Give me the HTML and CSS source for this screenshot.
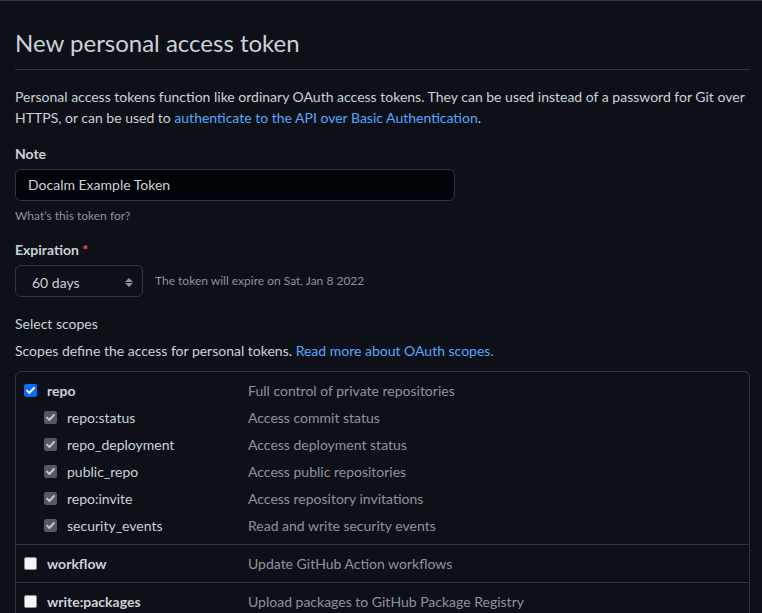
FILE: index.html
```html
<!DOCTYPE html>
<html>
<head>
<meta charset="utf-8">
<link rel="stylesheet" href="styles.css">
</head>
<body>
<div class="page">
  <div class="subhead"><h2 class="subhead-heading">New personal access token</h2></div>
  <p class="intro">Personal access tokens function like ordinary OAuth access tokens. They can be used instead of a password for Git over HTTPS, or can be used to <a href="#">authenticate to the API over Basic Authentication</a>.</p>

  <div class="form-group">
    <label class="label">Note</label>
    <div class="input">Docalm Example Token</div>
    <p class="note">What’s this token for?</p>
  </div>

  <div class="form-group form-group-exp">
    <label class="label">Expiration <span class="req">*</span></label>
    <div class="exp-row">
      <div class="select"><span>60 days</span>
        <svg class="arrows" width="8" height="9" viewBox="0 0 8 9"><path d="M4 0 L8 4 H0 Z M0 5 H8 L4 9 Z" fill="#8b949e"/></svg>
      </div>
      <span class="note exp-note">The token will expire on Sat, Jan 8 2022</span>
    </div>
  </div>

  <h3 class="scopes-title">Select scopes</h3>
  <p class="scopes-desc">Scopes define the access for personal tokens. <a href="#">Read more about OAuth scopes.</a></p>

  <div class="scopes">
    <div class="group">
      <div class="row">
        <span class="cb cb-on"><svg viewBox="0 0 13 13" width="13" height="13"><path d="M3 6.6 L5.4 9 L10 4" fill="none" stroke="#fff" stroke-width="1.9" stroke-linecap="round" stroke-linejoin="round"/></svg></span>
        <span class="name parent">repo</span>
        <span class="desc">Full control of private repositories</span>
      </div>
      <div class="row sub">
        <span class="cb cb-dis"><svg viewBox="0 0 13 13" width="13" height="13"><path d="M3 6.6 L5.4 9 L10 4" fill="none" stroke="#c6c6c6" stroke-width="1.9" stroke-linecap="round" stroke-linejoin="round"/></svg></span>
        <span class="name">repo:status</span>
        <span class="desc">Access commit status</span>
      </div>
      <div class="row sub">
        <span class="cb cb-dis"><svg viewBox="0 0 13 13" width="13" height="13"><path d="M3 6.6 L5.4 9 L10 4" fill="none" stroke="#c6c6c6" stroke-width="1.9" stroke-linecap="round" stroke-linejoin="round"/></svg></span>
        <span class="name">repo_deployment</span>
        <span class="desc">Access deployment status</span>
      </div>
      <div class="row sub">
        <span class="cb cb-dis"><svg viewBox="0 0 13 13" width="13" height="13"><path d="M3 6.6 L5.4 9 L10 4" fill="none" stroke="#c6c6c6" stroke-width="1.9" stroke-linecap="round" stroke-linejoin="round"/></svg></span>
        <span class="name">public_repo</span>
        <span class="desc">Access public repositories</span>
      </div>
      <div class="row sub">
        <span class="cb cb-dis"><svg viewBox="0 0 13 13" width="13" height="13"><path d="M3 6.6 L5.4 9 L10 4" fill="none" stroke="#c6c6c6" stroke-width="1.9" stroke-linecap="round" stroke-linejoin="round"/></svg></span>
        <span class="name">repo:invite</span>
        <span class="desc">Access repository invitations</span>
      </div>
      <div class="row sub">
        <span class="cb cb-dis"><svg viewBox="0 0 13 13" width="13" height="13"><path d="M3 6.6 L5.4 9 L10 4" fill="none" stroke="#c6c6c6" stroke-width="1.9" stroke-linecap="round" stroke-linejoin="round"/></svg></span>
        <span class="name">security_events</span>
        <span class="desc">Read and write security events</span>
      </div>
    </div>
    <div class="group">
      <div class="row">
        <span class="cb cb-off"></span>
        <span class="name parent">workflow</span>
        <span class="desc">Update GitHub Action workflows</span>
      </div>
    </div>
    <div class="group">
      <div class="row">
        <span class="cb cb-off"></span>
        <span class="name parent">write:packages</span>
        <span class="desc">Upload packages to GitHub Package Registry</span>
      </div>
    </div>
  </div>
</div>
</body>
</html>
```

FILE: styles.css
```css
* { box-sizing: border-box; }
html, body { margin: 0; padding: 0; }
body {
  background: #0d1117;
  color: #c9d1d9;
  font-family: Lato, "Noto Sans", sans-serif;
  font-size: 14px;
  line-height: 21px;
  border-top: 1px solid #30363d;
  overflow: hidden;
  height: 613px;
}
a { color: #58a6ff; text-decoration: none; }
.page {
  width: 735px;
  margin-left: 15px;
  padding-top: 24px;
}
.subhead {
  border-bottom: 1px solid #30363d;
  padding-bottom: 8px;
  margin-bottom: 16px;
}
.subhead-heading {
  margin: 0;
  font-size: 24px;
  line-height: 36px;
  font-weight: 400;
  color: #c9d1d9;
}
.intro { margin: 0; }
.form-group { margin-top: 15px; }
.form-group-exp { margin-top: 14px; }
.label {
  display: block;
  font-weight: 700;
  margin-bottom: 5px;
}
.req { color: #f85149; }
.input {
  width: 440px;
  height: 32px;
  background: #010409;
  border: 1px solid #30363d;
  border-radius: 6px;
  padding: 0 12px;
  line-height: 30px;
  color: #c9d1d9;
}
.note {
  margin: 6px 0 0;
  font-size: 12px;
  line-height: 18px;
  color: #8b949e;
}
.exp-row {
  display: flex;
  align-items: center;
  gap: 12px;
}
.select {
  width: 128px;
  height: 32px;
  border: 1px solid #30363d;
  border-radius: 6px;
  background: #0d1117;
  display: flex;
  align-items: center;
  justify-content: space-between;
  padding: 2px 9px 0 16px;
}
.arrows { display: block; }
.exp-note { margin: 0; }
.scopes-title {
  margin: 16px 0 0;
  font-size: 14px;
  line-height: 21px;
  font-weight: 400;
}
.scopes-desc { margin: 6px 0 0; }
.scopes {
  margin-top: 10px;
  border: 1px solid #30363d;
  border-radius: 6px;
}
.group {
  padding: 5px 0 5px;
  border-bottom: 1px solid #30363d;
}
.group:last-child { border-bottom: none; }
.row {
  display: flex;
  align-items: center;
  height: 27px;
  padding-left: 8px;
}
.row.sub { padding-left: 28px; }
.cb {
  width: 13px;
  height: 13px;
  border-radius: 2px;
  flex: none;
  display: block;
}
.cb svg { display: block; }
.cb-on { background: #0b6cf0; }
.cb-dis { background: #55585e; }
.cb-off { background: #f5f5f5; border: 1px solid #8f8f9d; }
.name {
  margin-left: 10px;
  width: 201px;
  flex: none;
}
.row.sub .name { width: 181px; }
.parent { font-weight: 700; }
.desc { color: #8b949e; }
```
